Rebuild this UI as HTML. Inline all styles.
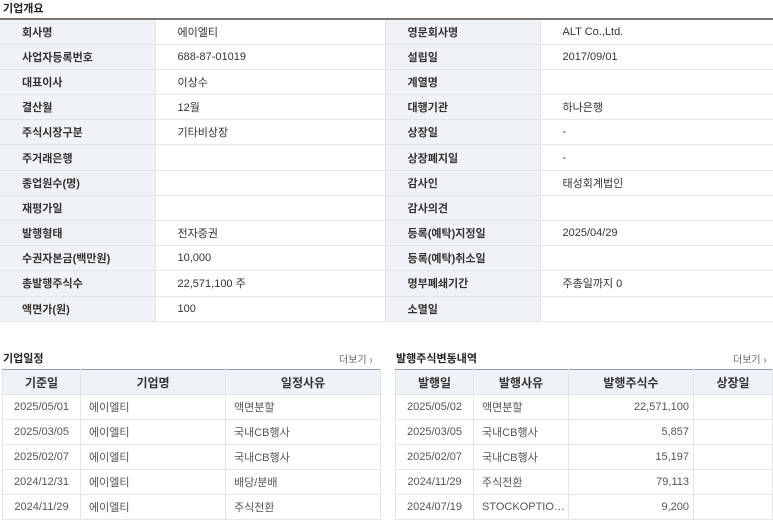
<!DOCTYPE html><html><head><meta charset="utf-8"><style>
*{margin:0;padding:0;box-sizing:border-box}
body{width:773px;height:523px;background:#fff;font-family:"Liberation Sans","Noto Sans CJK KR",sans-serif;font-size:11px;color:#333;position:relative;overflow:hidden}
.t{position:absolute;font-size:11px;color:#222;font-weight:bold}
table{border-collapse:collapse;position:absolute;table-layout:fixed}
td,th{height:25px;border-bottom:1px solid #e2e6ea;border-right:1px solid #e2e6ea;white-space:nowrap;overflow:hidden}
#a{left:0;top:18px;width:773px;border-top:2px solid #777}
#a td{height:25.2px;padding-left:22px;color:#333}
#a td.l{background:#eff3f7;color:#333;padding-left:22px;font-weight:bold}
#a td:last-child{border-right:none}
.b{top:369px;border-top:1px solid #8d9cb8;border-left:1px solid #e2e6ea}
.b th{background:#eef3f8;font-weight:bold;font-size:12px;color:#333;height:25px}
.b td{color:#555;font-size:11px;padding:0 8px}
.more{position:absolute;top:351px;font-size:10px;color:#666}
</style></head><body>
<div class="t" style="left:3px;top:0px">기업개요</div>
<table id="a"><colgroup><col style="width:155px"><col style="width:230px"><col style="width:155px"><col style="width:233px"></colgroup>
<tr><td class="l">회사명</td><td>에이엘티</td><td class="l">영문회사명</td><td>ALT Co.,Ltd.</td></tr>
<tr><td class="l">사업자등록번호</td><td>688-87-01019</td><td class="l">설립일</td><td>2017/09/01</td></tr>
<tr><td class="l">대표이사</td><td>이상수</td><td class="l">계열명</td><td></td></tr>
<tr><td class="l">결산월</td><td>12월</td><td class="l">대행기관</td><td>하나은행</td></tr>
<tr><td class="l">주식시장구분</td><td>기타비상장</td><td class="l">상장일</td><td>-</td></tr>
<tr><td class="l">주거래은행</td><td></td><td class="l">상장폐지일</td><td>-</td></tr>
<tr><td class="l">종업원수(명)</td><td></td><td class="l">감사인</td><td>태성회계법인</td></tr>
<tr><td class="l">재평가일</td><td></td><td class="l">감사의견</td><td></td></tr>
<tr><td class="l">발행형태</td><td>전자증권</td><td class="l">등록(예탁)지정일</td><td>2025/04/29</td></tr>
<tr><td class="l">수권자본금(백만원)</td><td>10,000</td><td class="l">등록(예탁)취소일</td><td></td></tr>
<tr><td class="l">총발행주식수</td><td>22,571,100 주</td><td class="l">명부폐쇄기간</td><td>주총일까지 0</td></tr>
<tr><td class="l">액면가(원)</td><td>100</td><td class="l">소멸일</td><td></td></tr>
</table>
<div class="t" style="left:3px;top:350px">기업일정</div>
<div class="more" style="left:339px">더보기 ›</div>
<table class="b" style="left:2px;width:378px"><colgroup><col style="width:78px"><col style="width:145px"><col style="width:155px"></colgroup>
<tr><th>기준일</th><th>기업명</th><th>일정사유</th></tr>
<tr><td style="text-align:center">2025/05/01</td><td>에이엘티</td><td>액면분할</td></tr>
<tr><td style="text-align:center">2025/03/05</td><td>에이엘티</td><td>국내CB행사</td></tr>
<tr><td style="text-align:center">2025/02/07</td><td>에이엘티</td><td>국내CB행사</td></tr>
<tr><td style="text-align:center">2024/12/31</td><td>에이엘티</td><td>배당/분배</td></tr>
<tr><td style="text-align:center">2024/11/29</td><td>에이엘티</td><td>주식전환</td></tr>
</table>
<div class="t" style="left:396px;top:350px">발행주식변동내역</div>
<div class="more" style="left:733px">더보기 ›</div>
<table class="b" style="left:395px;width:377px"><colgroup><col style="width:78px"><col style="width:95px"><col style="width:125px"><col style="width:79px"></colgroup>
<tr><th>발행일</th><th>발행사유</th><th>발행주식수</th><th>상장일</th></tr>
<tr><td style="text-align:center;padding:0">2025/05/02</td><td>액면분할</td><td style="text-align:right;padding-right:4px">22,571,100</td><td></td></tr>
<tr><td style="text-align:center;padding:0">2025/03/05</td><td>국내CB행사</td><td style="text-align:right;padding-right:4px">5,857</td><td></td></tr>
<tr><td style="text-align:center;padding:0">2025/02/07</td><td>국내CB행사</td><td style="text-align:right;padding-right:4px">15,197</td><td></td></tr>
<tr><td style="text-align:center;padding:0">2024/11/29</td><td>주식전환</td><td style="text-align:right;padding-right:4px">79,113</td><td></td></tr>
<tr><td style="text-align:center;padding:0">2024/07/19</td><td>STOCKOPTIO…</td><td style="text-align:right;padding-right:4px">9,200</td><td></td></tr>
</table>
</body></html>
